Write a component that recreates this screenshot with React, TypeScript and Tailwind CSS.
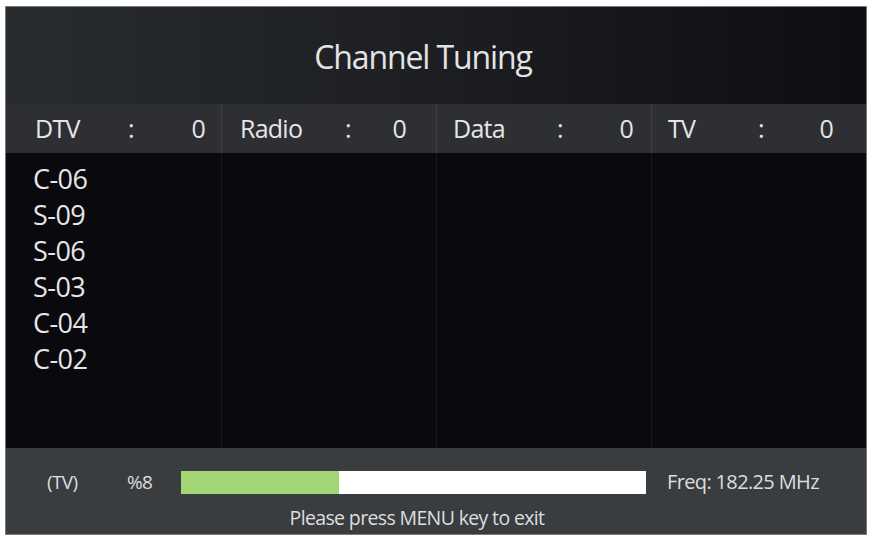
import React from "react";

const columns = [
  { label: "DTV", count: 0, pl: "pl-[29px]", lw: "w-[93px]", pr: "pr-[16px]" },
  { label: "Radio", count: 0, pl: "pl-[18px]", lw: "w-[105px]", pr: "pr-[30px]" },
  { label: "Data", count: 0, pl: "pl-[16px]", lw: "w-[104px]", pr: "pr-[18px]" },
  { label: "TV", count: 0, pl: "pl-[16px]", lw: "w-[90px]", pr: "pr-[33px]" },
];

const found = ["C-06", "S-09", "S-06", "S-03", "C-04", "C-02"];

const progress = 34;

export default function App() {
  return (
    <div
      className="w-[873px] h-[540px] bg-white pt-[6px] pl-[5px]"
      style={{ fontFamily: '"Open Sans", "Noto Sans", sans-serif' }}
    >
      <div className="w-[862px] h-[529px] flex flex-col border border-[#7a7a7a] bg-[#0a0a0e]">
        {/* Title bar */}
        <div className="h-[97px] flex items-center justify-center pr-[26px] bg-gradient-to-r from-[#292c2f] via-[#1c1e21] to-[#0d0e11]">
          <h1 className="text-[32px] tracking-[-0.035em] text-[#e4e4e4] mt-[2px]">
            Channel Tuning
          </h1>
        </div>

        {/* Service counters */}
        <div className="h-[49px] grid grid-cols-4 bg-[#2d2f33] text-[25px] text-[#e6e6e6] tracking-[-0.03em]">
          {columns.map((c, i) => (
            <div
              key={c.label}
              className={`flex items-center ${c.pl} ${c.pr} ${i > 0 ? "border-l border-[#3e4044]" : ""}`}
            >
              <span className={c.lw}>{c.label}</span>
              <span>:</span>
              <span className="ml-auto">{c.count}</span>
            </div>
          ))}
        </div>

        {/* Channel list */}
        <div className="flex-1 grid grid-cols-4">
          <div className="pl-[27px] pt-[8px] text-[27px] leading-[36px] text-[#e6e6e6] tracking-[-0.02em]">
            {found.map((ch) => (
              <div key={ch}>{ch}</div>
            ))}
          </div>
          <div className="border-l border-[#15161a]" />
          <div className="border-l border-[#15161a]" />
          <div className="border-l border-[#15161a]" />
        </div>

        {/* Progress */}
        <div className="h-[86px] bg-[#3a3d40] flex flex-col items-center pt-[22px] pr-[38px] text-[#dedede] tracking-[-0.04em]">
          <div className="w-full flex items-center h-[24px] text-[19px]">
            <span className="pl-[41px] w-[121px]">(TV)</span>
            <span className="w-[54px]">%8</span>
            <div className="w-[465px] h-[23px] bg-white flex">
              <div className="h-full bg-[#a2d574]" style={{ width: `${progress}%` }} />
            </div>
            <span className="pl-[21px] text-[20px]">Freq: 182.25 MHz</span>
          </div>
          <div className="mt-[9px] text-[19.5px]">Please press MENU key to exit</div>
        </div>
      </div>
    </div>
  );
}
